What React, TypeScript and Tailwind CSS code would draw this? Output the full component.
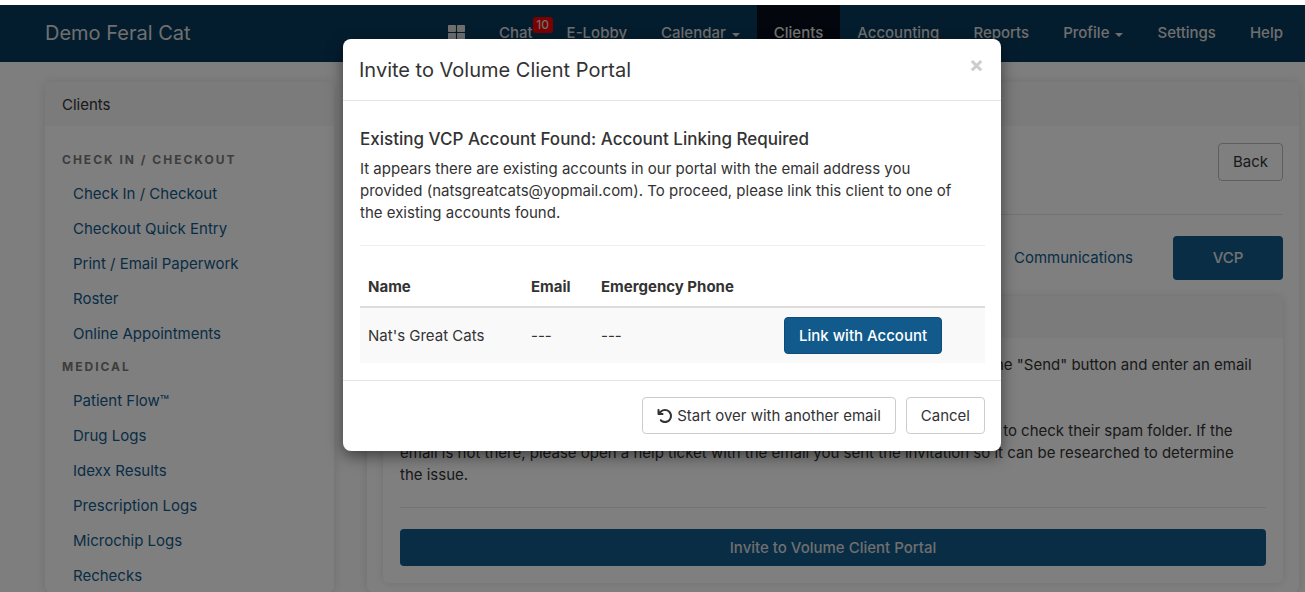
import { ReactNode } from "react";
import { FaThLarge } from "react-icons/fa";
import { FaArrowRotateLeft } from "react-icons/fa6";

const checkInLinks = [
    "Check In / Checkout",
    "Checkout Quick Entry",
    "Print / Email Paperwork",
    "Roster",
    "Online Appointments",
];

const medicalLinks = [
    "Patient Flow™",
    "Drug Logs",
    "Idexx Results",
    "Prescription Logs",
    "Microchip Logs",
    "Rechecks",
];

const accounts = [{ id: 1, name: "Nat's Great Cats", email: "---", phone: "---" }];

type NavItemProps = { children: ReactNode; active?: boolean; caret?: boolean; label?: string };

const NavItem = ({ children, active, caret, label }: NavItemProps) => (
    <li className="flex">
        <a
            href="#"
            aria-label={label}
            className={`flex items-center px-[17px] pb-[2px] font-medium ${active ? "bg-[#060d18] text-[#e6e6e6]" : "text-[#dedede]"}`}
        >
            {children}
            {caret && <span className="ml-[6px] mt-1 border-x-4 border-t-4 border-x-transparent border-t-current" />}
        </a>
    </li>
);

const Navbar = () => (
    <nav className="flex h-[57px] shrink-0 justify-between bg-[#093a5c] pl-[45px] pr-[5px]">
        <a href="#" className="flex items-center pb-[2px] text-xl text-[#dedede]">Demo Feral Cat</a>
        <ul className="flex">
            <NavItem label="Dashboard"><FaThLarge size={17} /></NavItem>
            <NavItem>
                <span className="relative">
                    Chat
                    <span className="absolute -top-[5px] left-full h-4 w-5 rounded-[3px] bg-[#fb0000] text-center text-xs leading-4">10</span>
                </span>
            </NavItem>
            <NavItem>E-Lobby</NavItem>
            <NavItem caret>Calendar</NavItem>
            <NavItem active>Clients</NavItem>
            <NavItem>Accounting</NavItem>
            <NavItem>Reports</NavItem>
            <NavItem caret>Profile</NavItem>
            <NavItem>Settings</NavItem>
            <NavItem>Help</NavItem>
        </ul>
    </nav>
);

const LinkGroup = ({ title, links }: { title: string; links: string[] }) => (
    <section>
        <h2 className="text-xs leading-4 font-bold tracking-[2px] text-[#7a7a7a] uppercase">{title}</h2>
        <ul className="mt-2 mb-2">
            {links.map((link) => (
                <li key={link} className="flex h-[35px] items-center pl-[11px]">
                    <a href="#" className="text-[#115a8b]">{link}</a>
                </li>
            ))}
        </ul>
    </section>
);

const Sidebar = () => (
    <aside className="w-[289px] shrink-0 rounded-md bg-white shadow-[0_0_10px_rgba(0,0,0,0.12)]">
        <div className="flex h-11 items-center rounded-t-md bg-[#f6f6f6] px-[17px] pt-[2px]">Clients</div>
        <div className="px-[17px] pt-[26px]">
            <LinkGroup title="Check In / Checkout" links={checkInLinks} />
            <LinkGroup title="Medical" links={medicalLinks} />
        </div>
    </aside>
);

const ClientPanel = () => (
    <main className="min-w-0 flex-1 rounded-md bg-white shadow-[0_0_10px_rgba(0,0,0,0.12)]">
        <div className="h-11 rounded-t-md bg-[#f6f6f6]" />
        <div className="px-4 pt-[17px]">
            <div className="flex justify-end border-b border-[#e6e6e6] pb-[33px]">
                <button className="h-[38px] rounded border border-[#bdbdbd] px-[14px]">Back</button>
            </div>
            <div className="mt-[21px] flex justify-end">
                <a href="#" className="flex h-11 items-center px-10 text-[#115a8b]">Communications</a>
                <a href="#" className="flex h-11 w-[110px] items-center justify-center rounded bg-[#115a8b] font-medium text-[#e6e6e6]">VCP</a>
            </div>
            <section className="mt-4 rounded-md shadow-[0_0_10px_rgba(0,0,0,0.12)]">
                <div className="h-[42px] rounded-t-md bg-[#f6f6f6]" />
                <div className="px-[17px] pt-4 pb-[17px]">
                    <p>
                        To send your client an invitation to access the Volume Client Portal, please click on the "Send" button and enter an email address for them.
                    </p>
                    <p className="mt-[22px]">
                        If the client does not receive the invitation within a few minutes, please ask the client to check their spam folder. If the <br />
                        email is not there, please open a help ticket with the email you sent the invitation so it can be researched to determine <br />
                        the issue.
                    </p>
                    <hr className="mt-[21px] mb-[21px] border-[#e6e6e6]" />
                    <button className="h-[37px] w-full rounded bg-[#115a8b] font-medium text-[#dedede]">
                        Invite to Volume Client Portal
                    </button>
                </div>
            </section>
        </div>
    </main>
);

const InviteModal = () => (
    <div
        role="dialog"
        aria-modal="true"
        aria-labelledby="invite-title"
        className="mt-[34px] w-[658px] rounded-lg bg-white shadow-[0_5px_15px_rgba(0,0,0,0.5)]"
    >
        <header className="flex h-[62px] items-center justify-between border-b border-[#e5e5e5] pr-[17px] pl-4">
            <h1 id="invite-title" className="text-xl">Invite to Volume Client Portal</h1>
            <button aria-label="Close" className="mb-3 text-[22px] leading-6 font-bold text-[#cccccc]">×</button>
        </header>
        <div className="pt-[26px] pr-4 pb-[17px] pl-[17px]">
            <h2 className="text-[17px] leading-6 font-medium">Existing VCP Account Found: Account Linking Required</h2>
            <p className="mt-[7px]">
                It appears there are existing accounts in our portal with the email address you <br />
                provided (natsgreatcats@yopmail.com). To proceed, please link this client to one of <br />
                the existing accounts found.
            </p>
            <hr className="my-[21px] border-[#eeeeee]" />
            <table className="w-full text-left">
                <thead>
                    <tr className="h-10 border-b-2 border-[#dddddd]">
                        <th className="w-[163px] px-2 font-bold">Name</th>
                        <th className="w-[70px] px-2 font-bold">Email</th>
                        <th className="w-[183px] px-2 font-bold">Emergency Phone</th>
                        <th />
                    </tr>
                </thead>
                <tbody>
                    {accounts.map((account) => (
                        <tr key={account.id} className="h-14 bg-[#f9f9f9]">
                            <td className="px-2">{account.name}</td>
                            <td className="px-2">{account.email}</td>
                            <td className="px-2">{account.phone}</td>
                            <td className="px-2">
                                <button className="h-[37px] rounded border border-[#0f4d77] bg-[#115a8b] px-[14px] font-medium text-white">
                                    Link with Account
                                </button>
                            </td>
                        </tr>
                    ))}
                </tbody>
            </table>
        </div>
        <footer className="flex justify-end gap-[10px] border-t border-[#e5e5e5] p-4 pb-[17px]">
            <button className="flex h-[37px] items-center gap-1 rounded border border-[#cccccc] px-[14px]">
                <FaArrowRotateLeft size={16} />
                Start over with another email
            </button>
            <button className="h-[37px] rounded border border-[#cccccc] px-[14px]">Cancel</button>
        </footer>
    </div>
);

export default function App() {
    return (
        <div className="h-screen overflow-hidden bg-white pt-[5px] font-['Inter',sans-serif] text-[15px] leading-[22px] text-[#333333]">
            <div className="relative flex h-full flex-col bg-[#fcfcfc]">
                <Navbar />
                <div className="flex min-h-0 flex-1 gap-[33px] pt-5 pr-[6px] pl-[45px]">
                    <Sidebar />
                    <ClientPanel />
                </div>
                <div className="absolute inset-0 flex items-start justify-center bg-black/50 pl-[39px]">
                    <InviteModal />
                </div>
            </div>
        </div>
    );
}
